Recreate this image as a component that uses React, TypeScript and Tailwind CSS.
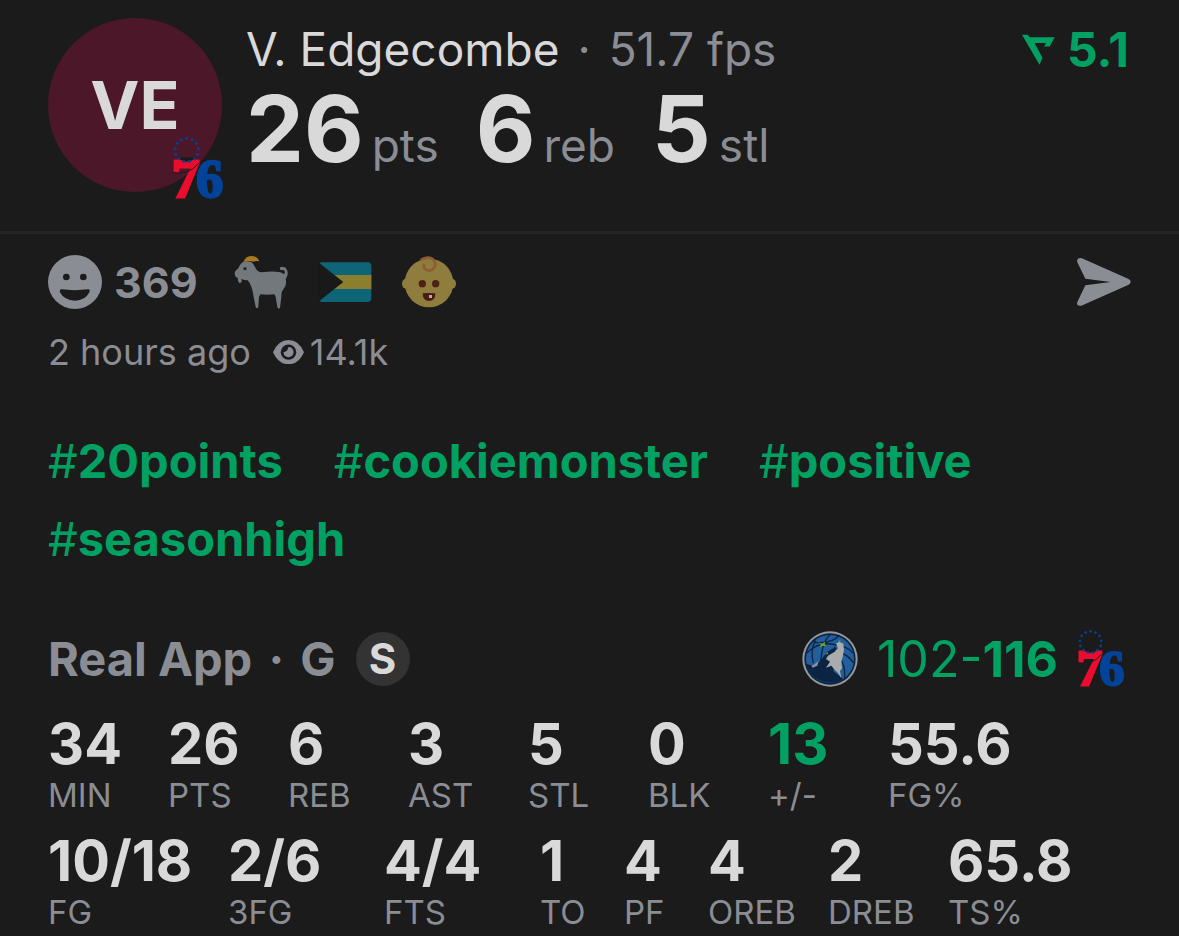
const headline = [
    { value: '26', label: 'pts' },
    { value: '6', label: 'reb' },
    { value: '5', label: 'stl' },
];

const tags = ['20points', 'cookiemonster', 'positive', 'seasonhigh'];

const statRows = [
    [
        { value: '34', label: 'MIN', width: 'w-30' },
        { value: '26', label: 'PTS', width: 'w-30' },
        { value: '6', label: 'REB', width: 'w-30' },
        { value: '3', label: 'AST', width: 'w-30' },
        { value: '5', label: 'STL', width: 'w-30' },
        { value: '0', label: 'BLK', width: 'w-30' },
        { value: '13', label: '+/-', width: 'w-30', positive: true },
        { value: '55.6', label: 'FG%', width: 'w-30' },
    ],
    [
        { value: '10/18', label: 'FG', width: 'w-45' },
        { value: '2/6', label: '3FG', width: 'w-39' },
        { value: '4/4', label: 'FTS', width: 'w-39' },
        { value: '1', label: 'TO', width: 'w-21' },
        { value: '4', label: 'PF', width: 'w-21' },
        { value: '4', label: 'OREB', width: 'w-30' },
        { value: '2', label: 'DREB', width: 'w-30' },
        { value: '65.8', label: 'TS%', width: 'w-30' },
    ],
];

const ring = Array.from({ length: 13 }, (_, i) => {
    const angle = (i / 13) * Math.PI * 2 - Math.PI / 2;
    return { x: 44 + 35 * Math.cos(angle), y: 36 + 35 * Math.sin(angle) };
});

function SixersLogo({ className }: { className: string }) {
    return (
        <svg viewBox="0 0 156 184" className={`overflow-visible ${className}`} role="img" aria-label="Philadelphia">
            <text x="0" y="177" fontFamily="Liberation Serif" fontWeight="700" fontSize="164" fill="#ec0c2e" stroke="#ec0c2e" strokeWidth="9">7</text>
            <path d="M14 58Q44 84 74 58Z" fill="#1b1b1b" />
            <path d="M0 102Q46 116 80 76" fill="none" stroke="#1b1b1b" strokeWidth="3" />
            <text x="72" y="177" fontFamily="Liberation Serif" fontWeight="700" fontSize="164" fill="#03439a" stroke="#03439a" strokeWidth="7">6</text>
            {ring.map((dot, i) => (
                <circle key={i} cx={dot.x} cy={dot.y} r="4.5" fill="#0b3f8c" />
            ))}
        </svg>
    );
}

function WolvesLogo() {
    return (
        <svg viewBox="0 0 168 168" className="size-14" role="img" aria-label="Minnesota">
            <circle cx="84" cy="84" r="83" fill="#96999c" />
            <circle cx="84" cy="84" r="77" fill="#0b2444" />
            <circle cx="84" cy="84" r="72" fill="#245f9c" />
            <g fill="none" stroke="#0b2444" strokeWidth="4">
                <path d="M34 34Q90 40 112 12M14 66Q60 20 126 50M84 12Q60 30 56 96M40 28Q24 60 34 96M112 80Q130 100 128 140M118 66Q140 74 155 96M122 46Q142 52 152 66" />
            </g>
            <path d="M13 98Q40 112 62 80L76 62L100 48L94 120L124 144Q84 168 42 142Q18 126 13 98Z" fill="#0b2444" />
            <path d="M28 104Q40 100 50 90L46 104L32 110Z" fill="#8e9296" />
            <path d="M102 38L112 32L124 38L126 56L122 78L118 92L120 112L114 120L118 142L108 126L98 116L88 104L72 110L84 92L72 84L78 74L98 62L108 52Z" fill="#a9abad" />
            <path d="M98 46L104 54L96 62L86 66Z" fill="#0b2444" />
            <path d="M48 34L60 38L70 32L68 40L74 46L62 44L54 48L56 40ZM70 70L78 64L78 70Z" fill="#75a52f" />
            <path d="M108 30L116 28L112 34Z" fill="#75a52f" />
        </svg>
    );
}

function Goat() {
    return (
        <svg viewBox="25 16 162 162" className="size-[54px]" aria-hidden="true">
            <path d="M54 36Q66 32 78 38Q84 44 90 56Q96 68 108 68Q140 64 160 67Q170 68 175 74Q180 68 175 62Q170 60 165 62Q160 56 165 52Q178 48 184 60Q190 76 180 88Q184 104 175 116Q166 126 167 142L163 174Q158 180 155 172L150 142L146 134Q124 136 104 134L100 142L98 172Q94 180 90 172L84 142Q82 126 78 114Q74 100 66 92Q54 92 48 88L48 97L42 101L37 94L36 84Q28 82 27 72Q28 62 38 56Q44 40 54 36Z" fill="#73787c" />
            <path d="M53 37Q60 17 80 19Q98 22 100 35Q90 32 84 36Q70 32 53 37Z" fill="#a97a20" />
            <circle cx="58" cy="57" r="5" fill="#25292c" />
        </svg>
    );
}

function BahamasFlag() {
    return (
        <svg viewBox="26 30 162 162" className="size-[54px]" aria-hidden="true">
            <path d="M38 52H174Q186 52 186 64V159Q186 171 174 171H38Q29 171 29 160V63Q29 52 38 52Z" fill="#0e6578" />
            <path d="M60 90H186V132H60Z" fill="#8b7f2f" />
            <path d="M26 51L102 111L26 171Z" fill="#191919" />
        </svg>
    );
}

function Baby() {
    return (
        <svg viewBox="276 27 162 162" className="size-[54px]" aria-hidden="true">
            <ellipse cx="288" cy="113" rx="12" ry="15" fill="#8e7d3c" />
            <ellipse cx="426" cy="113" rx="12" ry="15" fill="#8e7d3c" />
            <circle cx="357" cy="111" r="73" fill="#8e7d3c" />
            <path d="M332 42Q350 30 366 38Q380 48 373 64Q364 78 350 72Q338 66 343 54" fill="none" stroke="#935b34" strokeWidth="8" />
            <circle cx="337" cy="113" r="11" fill="#4c2218" />
            <circle cx="377" cy="113" r="11" fill="#4c2218" />
            <path d="M338 142Q357 140 376 142Q376 165 357 165Q338 165 338 142Z" fill="#4c1a15" />
            <path d="M357 147H366V156H357Z" fill="#b0aeac" />
        </svg>
    );
}

function Smile() {
    return (
        <svg viewBox="0 0 162 162" className="size-[54px] shrink-0" aria-hidden="true">
            <circle cx="81" cy="81" r="81" fill="#8b8d95" />
            <circle cx="55" cy="66" r="10" fill="#1b1b1b" />
            <circle cx="106" cy="66" r="10" fill="#1b1b1b" />
            <path d="M40 103Q80 108 121 103Q127 103 124 112Q112 137 81 137Q49 137 36 112Q34 103 40 103Z" fill="#1b1b1b" />
        </svg>
    );
}

export default function App() {
    return (
        <main className="min-h-screen w-full overflow-hidden bg-[#1b1b1b] font-['Inter',sans-serif] text-[#8b8d95]">
            <header className="flex items-start gap-6 border-b-3 border-[#252525] px-12 pt-[18px] pb-[39px]">
                <div className="relative flex size-[174px] shrink-0 items-center justify-center rounded-full bg-[#4c1728]">
                    <span className="text-[66px] font-bold leading-none text-[#d9d9d9]">VE</span>
                    <SixersLogo className="absolute -right-[2px] -bottom-[7px] w-[52px]" />
                </div>
                <div className="flex-1">
                    <div className="flex items-center justify-between">
                        <h1 className="text-[46px] leading-[63px]">
                            <span className="text-[#d9d9d9]">V. Edgecombe</span> <span className="mx-[5px]">·</span> 51.7 fps
                        </h1>
                        <p className="flex items-center gap-3 pr-0.5 text-[48px] font-bold leading-[63px] text-[#00a162]">
                            <svg viewBox="36 38 100 94" className="w-[33px]" aria-hidden="true">
                                <path d="M36 40H54L59 48H135L120 76H103L109 65H74L98 110L89 131Z" fill="currentColor" />
                            </svg>
                            5.1
                        </p>
                    </div>
                    <div className="flex gap-[37px]">
                        {headline.map((item) => (
                            <p key={item.label} className="flex items-baseline gap-2">
                                <span className="text-[92px] font-bold leading-[96px] text-[#d9d9d9]">{item.value}</span>
                                <span className="text-[46px] leading-[63px]">{item.label}</span>
                            </p>
                        ))}
                    </div>
                </div>
            </header>

            <section className="px-12 pt-[21px]">
                <div className="flex items-center justify-between">
                    <div className="flex items-center gap-[30px]">
                        <button type="button" className="mr-1.5 flex items-center gap-3 text-[43px] font-bold leading-[54px]">
                            <Smile />
                            369
                        </button>
                        <button type="button" aria-label="Goat"><Goat /></button>
                        <button type="button" aria-label="Bahamas"><BahamasFlag /></button>
                        <button type="button" aria-label="Baby"><Baby /></button>
                    </div>
                    <button type="button" aria-label="Share">
                        <svg viewBox="51 30 162 162" className="size-[54px]" aria-hidden="true">
                            <path d="M64 39L206 102Q218 110 206 119L64 182Q48 184 52 171L76 121L152 111L76 101L52 52Q49 38 64 39Z" fill="#8b8d95" />
                        </svg>
                    </button>
                </div>
                <div className="mt-4 flex items-center gap-5.5 text-[36px] leading-[54px]">
                    <span>2 hours ago</span>
                    <span className="flex items-center gap-1.5">
                        <svg viewBox="698 30 92 72" className="w-[31px]" aria-hidden="true">
                            <path d="M698 66Q714 30 744 30Q774 30 790 66Q774 102 744 102Q714 102 698 66Z" fill="currentColor" />
                            <circle cx="744" cy="66" r="23" fill="#1b1b1b" />
                            <path d="M744 51A15 15 0 1 1 729 66Q741 66 744 51Z" fill="currentColor" />
                        </svg>
                        14.1k
                    </span>
                </div>
            </section>

            <nav className="mt-[43px] flex flex-wrap gap-x-[51px] px-12">
                {tags.map((tag) => (
                    <a key={tag} href={`#${tag}`} className="text-[47px] font-bold leading-[78px] text-[#00a162]">
                        <span className="font-normal">#</span>{tag}
                    </a>
                ))}
            </nav>

            <section className="mt-[51px] px-12">
                <div className="flex items-center justify-between leading-[60px]">
                    <h2 className="flex items-center gap-5 text-[47px] font-bold">
                        <span>Real App <span className="mx-[5px]">·</span> G</span>
                        <span className="flex size-[54px] items-center justify-center rounded-full bg-[#333333] text-[42px] text-[#d9d9d9]">S</span>
                    </h2>
                    <div className="flex items-center gap-[19px] pr-1.5">
                        <WolvesLogo />
                        <span className="text-[50px] text-[#00a162]">102-<b>116</b></span>
                        <SixersLogo className="w-12" />
                    </div>
                </div>
                <div className="mt-[25px] space-y-3.5">
                    {statRows.map((row, i) => (
                        <dl key={i} className="flex">
                            {row.map((stat) => (
                                <div key={stat.label} className={`flex shrink-0 flex-col-reverse ${stat.width}`}>
                                    <dt className="text-[33px] leading-[43px]">{stat.label}</dt>
                                    <dd className={`text-[56px] font-bold leading-[60px] ${stat.positive ? 'text-[#00a162]' : 'text-[#d9d9d9]'}`}>{stat.value}</dd>
                                </div>
                            ))}
                        </dl>
                    ))}
                </div>
            </section>
        </main>
    );
}
